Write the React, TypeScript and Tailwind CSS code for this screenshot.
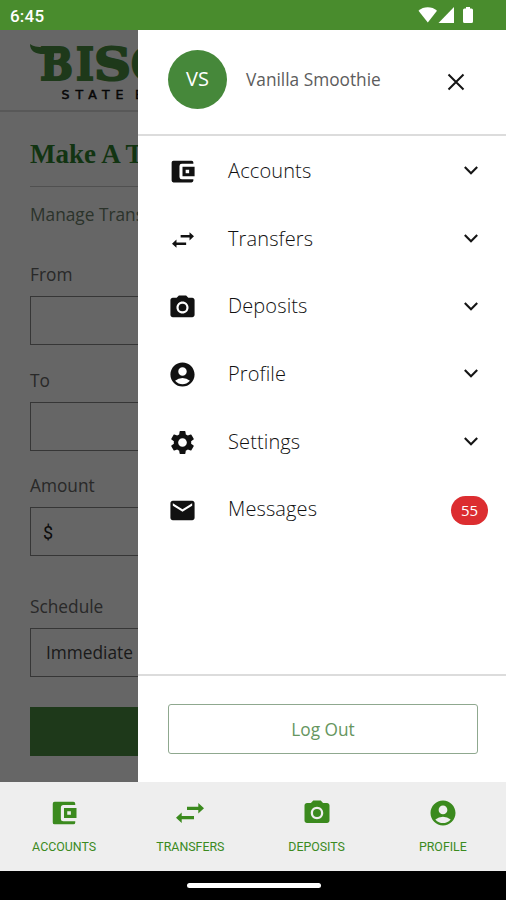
import type { ReactNode } from "react";
import {
  MdAccountCircle,
  MdCameraAlt,
  MdEmail,
  MdSettings,
} from "react-icons/md";

function Transfer({ className }: { className: string }) {
  return (
    <svg viewBox="0 0 28 20" fill="currentColor" className={className}>
      <path d="M28 5.300 22.300 0v3.700H11v3.200h11.300v3.700zM0 14.700 5.700 9.400v3.700H18v3.200H5.700V20z" />
    </svg>
  );
}

function Wallet({ className }: { className: string }) {
  return (
    <svg viewBox="0 0 24 24" fill="currentColor" className={className}>
      <path d="M3 4.500Q3 3 4.500 3H19.500Q21 3 21 4.500V5.500H11.500Q9.500 5.500 9.500 7.500V16.500Q9.500 18.500 11.500 18.500H21V19.500Q21 21 19.500 21H4.500Q3 21 3 19.500z" />
      <path fillRule="evenodd" d="M12 8h10v8H12zM14.600 10.600v2.800h2.900v-2.800z" />
    </svg>
  );
}

function Chevron() {
  return (
    <svg viewBox="0 0 14 9" className="h-[9px] w-[14px]" fill="none" stroke="#151515" strokeWidth="2.1">
      <path d="M.8.9 7 7.200 13.200.9" />
    </svg>
  );
}

function StatusBar() {
  return (
    <header className="flex h-[30px] shrink-0 items-center justify-between bg-[#498c2d] pl-[10px] pr-[32px] text-white">
      <span className="pt-[3px] font-[Roboto] text-[17px] font-medium leading-none tracking-[0.2px]">6:45</span>
      <svg viewBox="0 0 58 18" className="h-[18px] w-[58px]" fill="white">
        <path d="M2.500 4.700C7.500.2 16 .2 21 4.700L11.800 16.500z" />
        <path d="M38 1v16H22.500z" />
        <path d="M50 1h4v1.500h1.500q1.500 0 1.500 1.500v11.500q0 1.500-1.500 1.500h-7q-1.500 0-1.500-1.500V4q0-1.500 1.500-1.500H50z" />
      </svg>
    </header>
  );
}

function Field({ label, value, className }: { label: string; value?: ReactNode; className: string }) {
  return (
    <div className={className}>
      <div className="h-[22px] text-[17.3px] leading-[22px] text-[#666]">{label}</div>
      <div className="mt-[10px] flex h-[49px] items-center border border-[#888] pl-[15px] text-[17.3px]">{value}</div>
    </div>
  );
}

function TransferPage() {
  return (
    <div className="h-full w-full overflow-hidden bg-white text-[#555]">
      <div className="h-[82px] border-b-2 border-[#ddd] pl-[30px] pt-[12px]">
        <svg viewBox="0 0 108 64" className="h-[64px] w-[108px]">
          <path d="M0 2c3 2.500 7 3.200 15 3.200h20v6H24v4h-8v-3.200C6 12.500 0 9.500 0 2z" fill="#4b8f41" />
          <g fontFamily="DejaVu Serif" fontWeight="700" fontSize="44" fill="#4b8f41" stroke="#4b8f41" strokeWidth="2">
            <text x="10" y="38" textLength="33" lengthAdjust="spacingAndGlyphs">B</text>
            <text x="46" y="38" textLength="18" lengthAdjust="spacingAndGlyphs">I</text>
            <text x="64" y="38" textLength="37" lengthAdjust="spacingAndGlyphs">S</text>
            <text x="101" y="38" textLength="38" lengthAdjust="spacingAndGlyphs">O</text>
          </g>
          <g fontFamily="DejaVu Sans" fontWeight="400" fontSize="12.500" fill="#111" stroke="#111" strokeWidth=".5">
            <text x="31.500" y="57" textLength="62" lengthAdjust="spacing">STATE</text>
            <text x="105" y="57">B</text>
          </g>
        </svg>
      </div>
      <div className="pl-[30px] pr-[30px]">
        <h1 className="h-[75px] whitespace-nowrap border-b border-[#c8c8c8] pt-[26px] font-['Liberation_Serif',serif] text-[27px] font-bold leading-[32px] text-[#2f832f]">Make A Transfer</h1>
        <p className="mt-[16px] h-[24px] whitespace-nowrap text-[17.3px] leading-[24px] text-[#6d7f6d]">Manage Transfers</p>
        <Field label="From" className="mt-[37px]" />
        <Field label="To" className="mt-[25px]" />
        <Field label="Amount" className="mt-[24px]" value={<span className="-ml-[3px] pt-px font-[Roboto] text-[18px] text-[#222]">$</span>} />
        <Field label="Schedule" className="mt-[40px]" value={<span className="text-[#444]">Immediate</span>} />
        <div className="mt-[30px] h-[49px] bg-[#4b8f41]" />
      </div>
    </div>
  );
}

const rows = [
  { label: "Accounts", icon: <Wallet className="size-[29px]" /> },
  { label: "Transfers", icon: <Transfer className="h-[16px] w-[22px]" /> },
  { label: "Deposits", icon: <MdCameraAlt className="size-[29px]" /> },
  { label: "Profile", icon: <MdAccountCircle className="size-[29px]" /> },
  { label: "Settings", icon: <MdSettings className="size-[29px]" /> },
  { label: "Messages", icon: <MdEmail className="size-[29px]" />, count: 55 },
];

function Drawer() {
  return (
    <aside className="absolute inset-y-0 right-0 flex w-[368px] flex-col bg-white">
      <div className="flex h-[106px] shrink-0 items-center border-b-2 border-[#dcdcdc] pb-[6px] pl-[30px] pr-[41px]">
        <div className="flex size-[59px] items-center justify-center rounded-full bg-[#46883a] text-[20px] text-white">VS</div>
        <span className="ml-[19px] mt-px flex-1 text-[17.3px] text-[#5c5c5c]">Vanilla Smoothie</span>
        <svg viewBox="0 0 18 18" className="mt-[5px] size-[18px]" fill="none" stroke="#151515" strokeWidth="2">
          <path d="m1.500 1.500 15 15m0-15-15 15" />
        </svg>
      </div>
      <nav className="flex-1 pt-px">
        {rows.map((r) => (
          <div key={r.label} className="flex h-[67.700px] items-center text-[#111]">
            <span className="ml-[30px] flex w-[29px] justify-center pt-[2px]">{r.icon}</span>
            <span className="ml-[31px] flex-1 text-[20px] font-light leading-[28px] tracking-[0.12px]">{r.label}</span>
            {r.count ? (
              <span className="mr-[18px] mt-[2px] flex h-[29px] w-[37px] items-center justify-center rounded-full bg-[#dc2d30] pb-px text-[15px] text-white">{r.count}</span>
            ) : (
              <span className="mr-[28px]"><Chevron /></span>
            )}
          </div>
        ))}
      </nav>
      <div className="h-[108px] shrink-0 border-t-2 border-[#dcdcdc] pl-[30px] pr-[28px] pt-[28px]">
        <button className="flex h-[50px] w-full items-center justify-center rounded-[3px] border border-[#8fa88f] pt-px text-[17.3px] text-[#669660]">Log Out</button>
      </div>
    </aside>
  );
}

const tabs = [
  { label: "ACCOUNTS", icon: <Wallet className="size-[30px]" /> },
  { label: "TRANSFERS", icon: <Transfer className="h-[20px] w-[28px]" /> },
  { label: "DEPOSITS", icon: <MdCameraAlt className="size-[30px]" /> },
  { label: "PROFILE", icon: <MdAccountCircle className="size-[30px]" /> },
];

export default function App() {
  return (
    <div className="flex h-[900px] w-[506px] flex-col overflow-hidden bg-black font-['Open_Sans',sans-serif]">
      <StatusBar />
      <main className="relative h-[752px] shrink-0 overflow-hidden">
        <TransferPage />
        <div className="absolute inset-0 bg-black/60" />
        <Drawer />
      </main>
      <nav className="grid h-[89px] shrink-0 grid-cols-4 bg-[#eee] pl-px text-[#3b8a1e]">
        {tabs.map((t) => (
          <div key={t.label} className="flex flex-col items-center pt-[16px]">
            <span className="flex h-[30px] items-center">{t.icon}</span>
            <span className="mt-[11px] font-[Roboto] text-[12.400px] leading-[16px]">{t.label}</span>
          </div>
        ))}
      </nav>
      <footer className="flex flex-1 items-center justify-center pl-px">
        <div className="h-[5px] w-[134px] rounded-full bg-white" />
      </footer>
    </div>
  );
}
